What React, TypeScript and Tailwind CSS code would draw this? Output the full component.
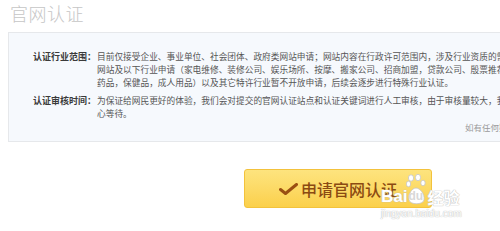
import React from 'react';

const cjk = { fontFamily: '"Noto Sans CJK SC", "Noto Sans", sans-serif' };

const Watermark: React.FC = () => (
  <div className="absolute left-[381px] top-[174px] pointer-events-none select-none" style={cjk}>
    <div className="flex items-end">
      <span
        className="text-[17px] leading-[18px] font-bold text-white"
        style={{ fontFamily: '"Liberation Sans", Arial, sans-serif', textShadow: '0 0 1px #b8b8b8, 0 0 1px #b8b8b8' }}
      >
        Bai
      </span>
      <div className="relative w-[20px] h-[32px] -ml-[1px]">
        <svg viewBox="0 0 20 32" className="absolute inset-0" width="20" height="32">
          <g fill="#fff" stroke="#c4c4c4" strokeWidth="0.8">
            <ellipse cx="5" cy="4" rx="2.6" ry="3.2" />
            <ellipse cx="12" cy="3.5" rx="2.6" ry="3.2" />
            <ellipse cx="2.5" cy="10" rx="2.2" ry="2.8" />
            <ellipse cx="17" cy="9" rx="2.2" ry="2.8" />
            <path d="M3 26 C2 20 6 14 10 14 C14 14 19 20 18 26 C17 31 4 31 3 26 Z" />
          </g>
        </svg>
        <span
          className="absolute left-[2px] top-[15px] text-[12px] leading-[14px] font-bold text-[#d8d8d8]"
          style={{ fontFamily: '"Liberation Sans", Arial, sans-serif' }}
        >
          du
        </span>
      </div>
      <span
        className="ml-[1px] text-[16px] leading-[18px] font-bold text-white"
        style={{ textShadow: '0 0 1px #b8b8b8, 0 0 1px #b8b8b8' }}
      >
        经验
      </span>
    </div>
    <div
      className="mt-[2px] text-[10px] leading-[11px] text-white"
      style={{ fontFamily: '"Liberation Sans", Arial, sans-serif', textShadow: '0 0 1px #bdbdbd, 0 0 1px #bdbdbd' }}
    >
      jingyan.baidu.com
    </div>
  </div>
);

export default function App() {
  return (
    <div className="relative w-[500px] h-[231px] overflow-hidden bg-white" style={cjk}>
      <h1 className="pl-[10px] pt-[1px] text-[18px] leading-[24px] font-light text-[#c6c6c6] tracking-[0.5px]">
        官网认证
      </h1>

      <div className="mt-[7px] ml-[8px] w-[600px] h-[110px] border border-[#e6e8eb] bg-[#f6f9fd] pt-[17px] pl-[24px]">
        <div className="flex leading-[13px]">
          <div className="w-[64px] shrink-0 text-[9px] font-bold text-[#3a3a3a]">认证行业范围：</div>
          <div className="text-[8.7px] text-[#555] whitespace-nowrap">
            <div>目前仅接受企业、事业单位、社会团体、政府类网站申请；网站内容在行政许可范围内，涉及行业资质的需提供</div>
            <div>网站及以下行业申请（家电维修、装修公司、娱乐场所、按摩、搬家公司、招商加盟，贷款公司、殷票推荐、</div>
            <div>药品，保健品，成人用品）以及其它特许行业暂不开放申请，后续会逐步进行特殊行业认证。</div>
          </div>
        </div>
        <div className="flex mt-[5px] leading-[13px]">
          <div className="w-[64px] shrink-0 text-[9px] font-bold text-[#3a3a3a]">认证审核时间：</div>
          <div className="text-[8.7px] text-[#555] whitespace-nowrap">
            <div>为保证给网民更好的体验，我们会对提交的官网认证站点和认证关键词进行人工审核，由于审核量较大，我们请您耐</div>
            <div>心等待。</div>
          </div>
        </div>
        <div className="mt-[1px] pl-[432px] text-[8.5px] leading-[13px] text-[#9a9a9a] whitespace-nowrap">
          如有任何疑问，请联系我们
        </div>
      </div>

      <button
        className="mt-[27px] ml-[244px] w-[188px] h-[39px] rounded-[3px] border border-[#f3c23c] bg-gradient-to-b from-[#fde47e] to-[#fbd04a] flex items-center pl-[34px] gap-[3px] text-[#8b4a12]"
      >
        <svg width="19" height="12" viewBox="0 0 19 12" className="mt-[1px]">
          <path d="M1.5 6.5 L6.5 10.5 L17.5 1.5" fill="none" stroke="#9a4f12" strokeWidth="3" strokeLinecap="round" strokeLinejoin="round" />
        </svg>
        <span className="text-[16px] leading-[20px] font-medium">申请官网认证</span>
      </button>

      <Watermark />
    </div>
  );
}
